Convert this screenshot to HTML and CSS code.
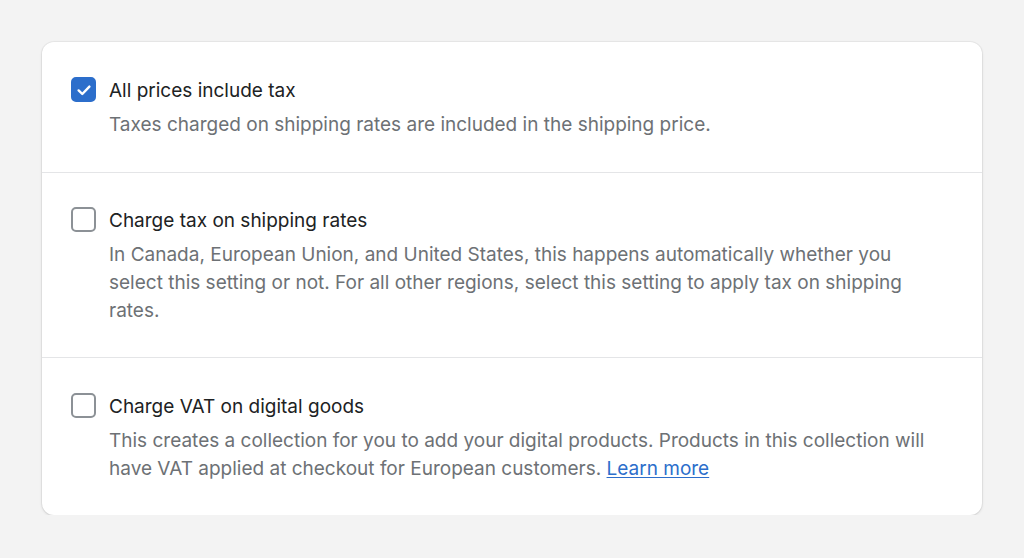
FILE: index.html
```html
<!DOCTYPE html>
<html lang="en">
<head>
<meta charset="utf-8">
<title>Tax settings</title>
<link rel="stylesheet" href="styles.css">
</head>
<body>
<div class="page">
  <div class="card">
    <div class="section">
      <span class="box checked">
        <svg viewBox="0 0 20 20" width="20" height="20"><path d="M4.6 10.4l3.7 3.6L15.4 6.6" fill="none" stroke="#fff" stroke-width="2.4" stroke-linecap="round" stroke-linejoin="round"/></svg>
      </span>
      <div class="text">
        <div class="title">All prices include tax</div>
        <div class="desc">Taxes charged on shipping rates are included in the shipping price.</div>
      </div>
    </div>
    <div class="section">
      <span class="box"></span>
      <div class="text">
        <div class="title">Charge tax on shipping rates</div>
        <div class="desc">In Canada, European Union, and United States, this happens automatically whether you select this setting or not. For all other regions, select this setting to apply tax on shipping rates.</div>
      </div>
    </div>
    <div class="section">
      <span class="box"></span>
      <div class="text">
        <div class="title">Charge VAT on digital goods</div>
        <div class="desc">This creates a collection for you to add your digital products. Products in this collection will have VAT applied at checkout for European customers. <a href="#" class="link">Learn more</a></div>
      </div>
    </div>
  </div>
</div>
</body>
</html>
```
FILE: styles.css
```css
html, body {
  margin: 0;
  padding: 0;
  background: #f3f3f3;
  font-family: Inter, "Noto Sans", sans-serif;
}
.page {
  padding: 42px 42px 0 42px;
}
.card {
  width: 940px;
  background: #fff;
  border-radius: 12px;
  box-shadow: 0 0 0 1px rgba(0,0,0,0.04), 0 1px 3px rgba(0,0,0,0.12);
}
.section {
  display: flex;
  align-items: flex-start;
  gap: 13px;
  padding: 34px 38px 32px 29px;
  border-top: 1px solid #e4e5e7;
}
.section:first-child {
  border-top: none;
  padding-top: 35px;
  padding-bottom: 33px;
}
.section:last-child {
  padding-top: 35px;
}
.text {
  flex: 1;
}
.box {
  flex: none;
  width: 25px;
  height: 25px;
  box-sizing: border-box;
  border: 2px solid #8c9196;
  border-radius: 5px;
  margin-top: 0;
  display: flex;
  align-items: center;
  justify-content: center;
}
.box.checked {
  background: #2c6ecb;
  border-color: #2c6ecb;
}
.title {
  font-size: 19px;
  line-height: 28px;
  color: #202223;
  margin-bottom: 6px;
}
.desc {
  font-size: 19px;
  line-height: 28px;
  color: #6d7175;
}
.link {
  color: #2c6ecb;
  text-decoration: underline;
  text-underline-offset: 2px;
}
```
